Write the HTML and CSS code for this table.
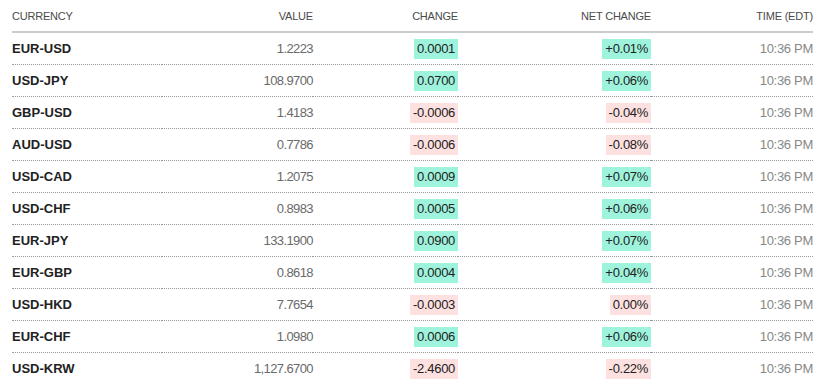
FILE: index.html
```html
<!DOCTYPE html>
<html lang="en">
<head>
  <meta charset="UTF-8" />
  <title>Currencies</title>
  <link rel="stylesheet" href="styles.css">
</head>
<body>
  <table class="quotes">
    <colgroup>
      <col class="c-name">
      <col class="c-value">
      <col class="c-change">
      <col class="c-net">
      <col class="c-time">
    </colgroup>
    <thead>
      <tr>
        <th class="left">Currency</th>
        <th>Value</th>
        <th>Change</th>
        <th>Net Change</th>
        <th>Time (EDT)</th>
      </tr>
    </thead>
    <tbody>
      <tr><td class="name">EUR-USD</td><td class="value">1.2223</td><td><span class="badge up">0.0001</span></td><td><span class="badge up">+0.01%</span></td><td class="time">10:36 PM</td></tr>
      <tr><td class="name">USD-JPY</td><td class="value">108.9700</td><td><span class="badge up">0.0700</span></td><td><span class="badge up">+0.06%</span></td><td class="time">10:36 PM</td></tr>
      <tr><td class="name">GBP-USD</td><td class="value">1.4183</td><td><span class="badge down">-0.0006</span></td><td><span class="badge down">-0.04%</span></td><td class="time">10:36 PM</td></tr>
      <tr><td class="name">AUD-USD</td><td class="value">0.7786</td><td><span class="badge down">-0.0006</span></td><td><span class="badge down">-0.08%</span></td><td class="time">10:36 PM</td></tr>
      <tr><td class="name">USD-CAD</td><td class="value">1.2075</td><td><span class="badge up">0.0009</span></td><td><span class="badge up">+0.07%</span></td><td class="time">10:36 PM</td></tr>
      <tr><td class="name">USD-CHF</td><td class="value">0.8983</td><td><span class="badge up">0.0005</span></td><td><span class="badge up">+0.06%</span></td><td class="time">10:36 PM</td></tr>
      <tr><td class="name">EUR-JPY</td><td class="value">133.1900</td><td><span class="badge up">0.0900</span></td><td><span class="badge up">+0.07%</span></td><td class="time">10:36 PM</td></tr>
      <tr><td class="name">EUR-GBP</td><td class="value">0.8618</td><td><span class="badge up">0.0004</span></td><td><span class="badge up">+0.04%</span></td><td class="time">10:36 PM</td></tr>
      <tr><td class="name">USD-HKD</td><td class="value">7.7654</td><td><span class="badge down">-0.0003</span></td><td><span class="badge down">0.00%</span></td><td class="time">10:36 PM</td></tr>
      <tr><td class="name">EUR-CHF</td><td class="value">1.0980</td><td><span class="badge up">0.0006</span></td><td><span class="badge up">+0.06%</span></td><td class="time">10:36 PM</td></tr>
      <tr><td class="name">USD-KRW</td><td class="value">1,127.6700</td><td><span class="badge down">-2.4600</span></td><td><span class="badge down">-0.22%</span></td><td class="time">10:36 PM</td></tr>
    </tbody>
  </table>
</body>
</html>
```

FILE: styles.css
```css
body {
  margin: 0;
  padding: 0 10px 0 12px;
  font-family: 'Liberation Sans', Arial, sans-serif;
  background: #fff;
  color: #222;
}
.quotes {
  width: 801px;
  border-collapse: collapse;
  table-layout: fixed;
}
.c-name { width: 150px; }
.c-value { width: 151px; }
.c-change { width: 145px; }
.c-net { width: 193px; }
.c-time { width: 162px; }
.quotes th {
  height: 31px;
  padding: 0;
  font-size: 11px;
  font-weight: normal;
  text-transform: uppercase;
  text-align: right;
  color: #4a4a4a;
  letter-spacing: -0.2px;
  border-bottom: 2px solid #ccc;
}
.quotes th.left {
  text-align: left;
}
.quotes td {
  height: 31px;
  padding: 0;
  font-size: 13px;
  text-align: right;
  letter-spacing: -0.3px;
  border-bottom: 1px dotted #999;
}
.quotes tbody tr:last-child td {
  border-bottom: none;
}
.quotes td.name {
  text-align: left;
  font-weight: bold;
  color: #222;
  letter-spacing: 0;
}
.quotes td.value {
  color: #6a6a6a;
  letter-spacing: -0.6px;
}
.time {
  color: #888;
}
.badge {
  display: inline-block;
  line-height: 20px;
  padding: 0 3px;
  color: #222;
}
.badge.up {
  background: #9ef3dc;
}
.badge.down {
  background: #fde0e0;
}
```
